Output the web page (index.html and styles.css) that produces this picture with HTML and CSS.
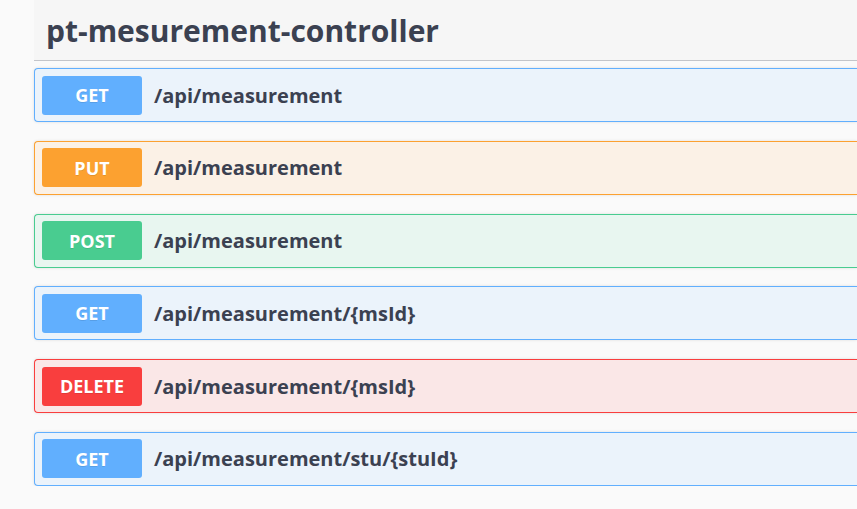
FILE: index.html
```html
<!DOCTYPE html>
<html>
<head>
<meta charset="utf-8">
<link rel="stylesheet" href="styles.css">
</head>
<body>
<div class="wrap">
  <div class="tag"><h3 class="tag-title">pt-mesurement-controller</h3></div>
  <div class="ops">
    <div class="op get"><span class="method">GET</span><span class="path">/api/measurement</span></div>
    <div class="op put"><span class="method">PUT</span><span class="path">/api/measurement</span></div>
    <div class="op post"><span class="method">POST</span><span class="path">/api/measurement</span></div>
    <div class="op get"><span class="method">GET</span><span class="path">/api/measurement/{msId}</span></div>
    <div class="op delete"><span class="method">DELETE</span><span class="path">/api/measurement/{msId}</span></div>
    <div class="op get"><span class="method">GET</span><span class="path">/api/measurement/stu/{stuId}</span></div>
  </div>
</div>
</body>
</html>
```
FILE: styles.css
```css
html, body {
  margin: 0;
  padding: 0;
  background: #fafafa;
}
body {
  font-family: "Open Sans", "Noto Sans", sans-serif;
  color: #3b4151;
}
.wrap {
  margin-left: 34px;
}
.tag {
  height: 60px;
  background: #f6f6f6;
  border-bottom: 1px solid #c3c5ca;
  display: flex;
  align-items: center;
  padding-left: 12px;
}
.tag-title {
  margin: 0;
  font-size: 30px;
  font-weight: 700;
  line-height: 1;
  padding-top: 1px;
}
.ops {
  padding-top: 7px;
  display: flex;
  flex-direction: column;
  gap: 18.8px;
}
.op {
  height: 52px;
  border: 1px solid;
  border-right: none;
  border-radius: 4px 0 0 4px;
  display: flex;
  align-items: center;
  padding-left: 7px;
  box-shadow: 0 0 3px rgba(0,0,0,0.12);
}
.method {
  width: 100px;
  height: 39px;
  border-radius: 3px;
  color: #fff;
  font-size: 18px;
  font-weight: 700;
  display: flex;
  align-items: center;
  justify-content: center;
  text-shadow: 0 1px 0 rgba(0,0,0,0.1);
}
.path {
  margin-left: 12px;
  font-size: 20px;
  font-weight: 700;
}
.get { background: #ebf3fb; border-color: #61affe; }
.get .method { background: #61affe; }
.put { background: #fbf1e6; border-color: #fca130; }
.put .method { background: #fca130; }
.post { background: #e8f6f0; border-color: #49cc90; }
.post .method { background: #49cc90; }
.delete { background: #fae7e7; border-color: #f93e3e; }
.delete .method { background: #f93e3e; }
```
